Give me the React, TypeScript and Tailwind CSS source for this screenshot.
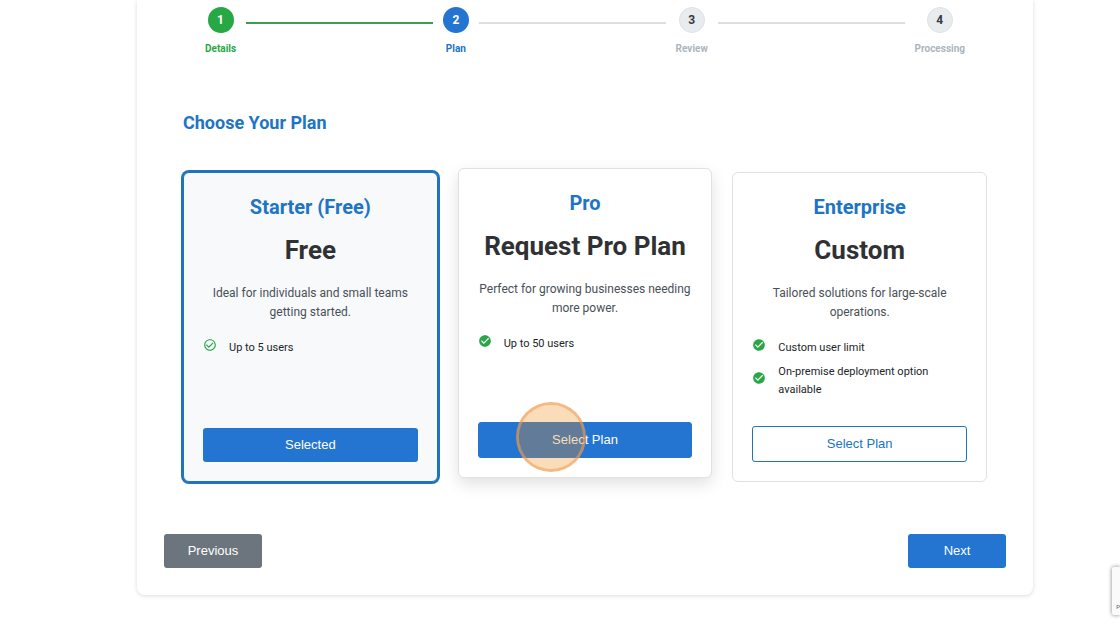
import { Fragment, useState } from "react";
import { MdCheckCircle, MdCheckCircleOutline } from "react-icons/md";
import clsx from "clsx";

const steps = [
  { number: 1, label: "Details" },
  { number: 2, label: "Plan" },
  { number: 3, label: "Review" },
  { number: 4, label: "Processing" },
];

const plans = [
  {
    id: "starter",
    name: "Starter (Free)",
    price: "Free",
    description: "Ideal for individuals and small teams getting started.",
    features: ["Up to 5 users"],
  },
  {
    id: "pro",
    name: "Pro",
    price: "Request Pro Plan",
    description: "Perfect for growing businesses needing more power.",
    features: ["Up to 50 users"],
  },
  {
    id: "enterprise",
    name: "Enterprise",
    price: "Custom",
    description: "Tailored solutions for large-scale operations.",
    features: ["Custom user limit", "On-premise deployment option available"],
  },
];

type Plan = (typeof plans)[number];

function Stepper({ current }: { current: number }) {
  return (
    <ol className="flex items-start gap-2.5 px-[41px]">
      {steps.map((step) => {
        const done = step.number < current;
        const active = step.number === current;

        return (
          <Fragment key={step.number}>
            <li className="flex flex-col items-center gap-2">
              <span
                className={clsx(
                  "flex size-[26px] items-center justify-center rounded-full text-xs font-bold",
                  done && "bg-[#28a745] text-white",
                  active && "bg-[#2474d2] text-white",
                  !done &&
                    !active &&
                    "border border-[#dee2e6] bg-[#e9ecef] text-[#343a40]",
                )}
              >
                {step.number}
              </span>
              <span
                className={clsx(
                  "text-[10px] leading-[15px] font-bold",
                  done && "text-[#28a745]",
                  active && "text-[#2074c6]",
                  !done && !active && "text-[#adb5bd]",
                )}
              >
                {step.label}
              </span>
            </li>

            {step.number < steps.length && (
              <li
                aria-hidden="true"
                className={clsx(
                  "mt-[15px] h-0.5 flex-1",
                  done ? "bg-[#3a9d55]" : "bg-[#dcdee0]",
                )}
              />
            )}
          </Fragment>
        );
      })}
    </ol>
  );
}

function PlanCard({
  plan,
  selected,
  hovered,
  onSelect,
}: {
  plan: Plan;
  selected: boolean;
  hovered: boolean;
  onSelect: () => void;
}) {
  const CheckIcon = selected ? MdCheckCircleOutline : MdCheckCircle;

  return (
    <article
      className={clsx(
        "flex flex-col rounded-md border px-[19px] pt-[22px] pb-[19px]",
        selected
          ? "border-[#2074bc] bg-[#f8f9fb] ring-2 ring-[#2074bc]"
          : "border-[#dfe1e4] bg-white",
        hovered && "-translate-y-1 shadow-[0_6px_16px_rgba(0,0,0,0.12)]",
      )}
    >
      <h3 className="text-center text-xl leading-6 font-bold text-[#2074c6]">
        {plan.name}
      </h3>
      <p className="mt-[15px] text-center text-[26px] leading-8 font-bold text-[#303133]">
        {plan.price}
      </p>
      <p className="mt-[18px] text-center text-xs leading-[19px] text-[#495057]">
        {plan.description}
      </p>

      <ul className="mt-[17px] mb-[27px] flex flex-col gap-1.5">
        {plan.features.map((feature) => (
          <li
            key={feature}
            className="flex items-center gap-3 text-[11px] leading-[18px] text-[#212529]"
          >
            <CheckIcon size={14} className="-mt-1.5 shrink-0 text-[#28a745]" />
            {feature}
          </li>
        ))}
      </ul>

      <div className="relative mt-auto">
        <button
          type="button"
          onClick={onSelect}
          className={clsx(
            "block w-full rounded-[3px] font-['Liberation_Sans',Arial,sans-serif] text-[13px]",
            selected && "h-[34px] bg-[#2474d2] text-white",
            !selected && "h-9 border",
            !selected && hovered && "border-[#2474d2] bg-[#2474d2] text-white",
            !selected && !hovered && "border-[#2074bc] bg-white text-[#2074c6]",
          )}
        >
          {selected ? "Selected" : "Select Plan"}
        </button>

        {/* Click marker */}
        {hovered && (
          <span className="pointer-events-none absolute -top-5 left-[38px] size-[70px] rounded-full border-[3px] border-[#f09a4a]/70 bg-[#f08c14]/30 bg-clip-padding" />
        )}
      </div>
    </article>
  );
}

export default function App() {
  const [selectedId, setSelectedId] = useState("starter");

  return (
    <div className="bg-white pr-4 pb-8 pl-[66px] font-[Roboto,'Liberation_Sans',sans-serif]">
      <main className="mx-auto max-w-4xl rounded-b-lg bg-white px-[27px] pt-[7px] pb-[27px] shadow-[0_1px_4px_rgba(0,0,0,0.14)]">
        <Stepper current={2} />

        <section className="mt-[55px] px-[19px]">
          <h2 className="text-lg leading-6 font-bold text-[#2074c6]">
            Choose Your Plan
          </h2>

          <div className="mt-[37px] grid grid-cols-3 gap-5">
            {plans.map((plan) => (
              <PlanCard
                key={plan.id}
                plan={plan}
                selected={plan.id === selectedId}
                hovered={plan.id === "pro"}
                onSelect={() => setSelectedId(plan.id)}
              />
            ))}
          </div>
        </section>

        <div className="mt-[52px] flex justify-between font-['Liberation_Sans',Arial,sans-serif] text-[13px] text-white">
          <button
            type="button"
            className="h-[34px] w-[98px] rounded-[3px] bg-[#6c757d]"
          >
            Previous
          </button>
          <button
            type="button"
            className="h-[34px] w-[98px] rounded-[3px] bg-[#2474d2]"
          >
            Next
          </button>
        </div>
      </main>

      {/* Badge docked to the window edge */}
      <aside className="fixed right-0 bottom-3 flex h-12 w-2 items-end justify-end overflow-hidden rounded-l-xs bg-[#fafafa] pb-1 text-[6px] leading-[8px] text-[#555] shadow-[0_0_4px_#808080]">
        P
      </aside>
    </div>
  );
}
